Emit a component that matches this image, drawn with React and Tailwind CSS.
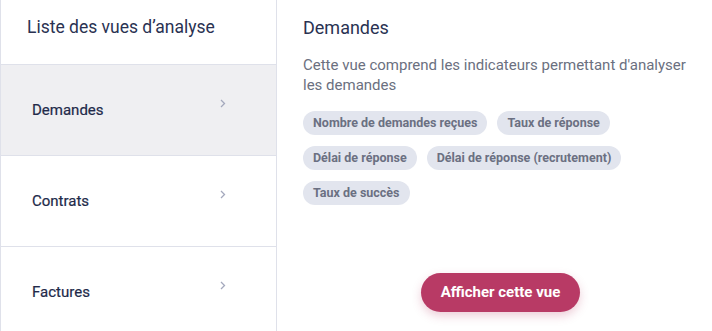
const views = [
  { name: "Demandes", active: true },
  { name: "Contrats" },
  { name: "Factures" },
];

const indicators = [
  "Nombre de demandes reçues",
  "Taux de réponse",
  "Délai de réponse",
  "Délai de réponse (recrutement)",
  "Taux de succès",
];

const Chevron = () => (
  <svg width="6" height="9" viewBox="0 0 6 9" fill="none" className="mb-[13px]">
    <path d="M1 1l3.5 3.5L1 8" stroke="#a4a9bd" strokeWidth="1.3" />
  </svg>
);

export default function App() {
  return (
    <div className="flex w-[712px] h-[331px] bg-white font-['Roboto',sans-serif] overflow-hidden">
      <aside className="w-[277px] shrink-0 border-l border-r border-[#dfe1ea] flex flex-col">
        <div className="h-[65px] shrink-0 border-b border-[#dfe1ea] flex items-center px-[26px] pb-[9px]">
          <h2 className="text-[17.5px] text-[#2a3252]">Liste des vues d’analyse</h2>
        </div>
        {views.map((v) => (
          <div
            key={v.name}
            className={`h-[91px] shrink-0 border-b border-[#dfe1ea] flex items-center justify-between pl-[31px] pr-[50px] ${
              v.active ? "bg-[#efeff2]" : "bg-white"
            }`}
          >
            <span className="text-[15px] text-[#222a4a] [-webkit-text-stroke:0.2px_#222a4a]">{v.name}</span>
            <Chevron />
          </div>
        ))}
      </aside>

      <main className="flex-1 flex flex-col pl-[26px] pr-[14px] pt-[16px] pb-[19px]">
        <h1 className="text-[18px] text-[#2a3252] leading-[24px]">Demandes</h1>
        <p className="mt-[15px] text-[15px] leading-[20px] text-[#6b7080]">
          Cette vue comprend les indicateurs permettant d'analyser les demandes
        </p>
        <div className="mt-[16px] flex flex-wrap gap-x-[10px] gap-y-[11px]">
          {indicators.map((i) => (
            <span
              key={i}
              className="h-[24px] flex items-center px-[10px] rounded-full bg-[#e2e5ee] text-[12.5px] font-bold text-[#6b7082]"
            >
              {i}
            </span>
          ))}
        </div>
        <div className="mt-auto flex justify-center">
          <button className="h-[39px] px-[20px] rounded-full bg-[#b83a65] text-white text-[15px] font-bold shadow-[0_4px_10px_rgba(184,58,101,0.25)]">
            Afficher cette vue
          </button>
        </div>
      </main>
    </div>
  );
}
